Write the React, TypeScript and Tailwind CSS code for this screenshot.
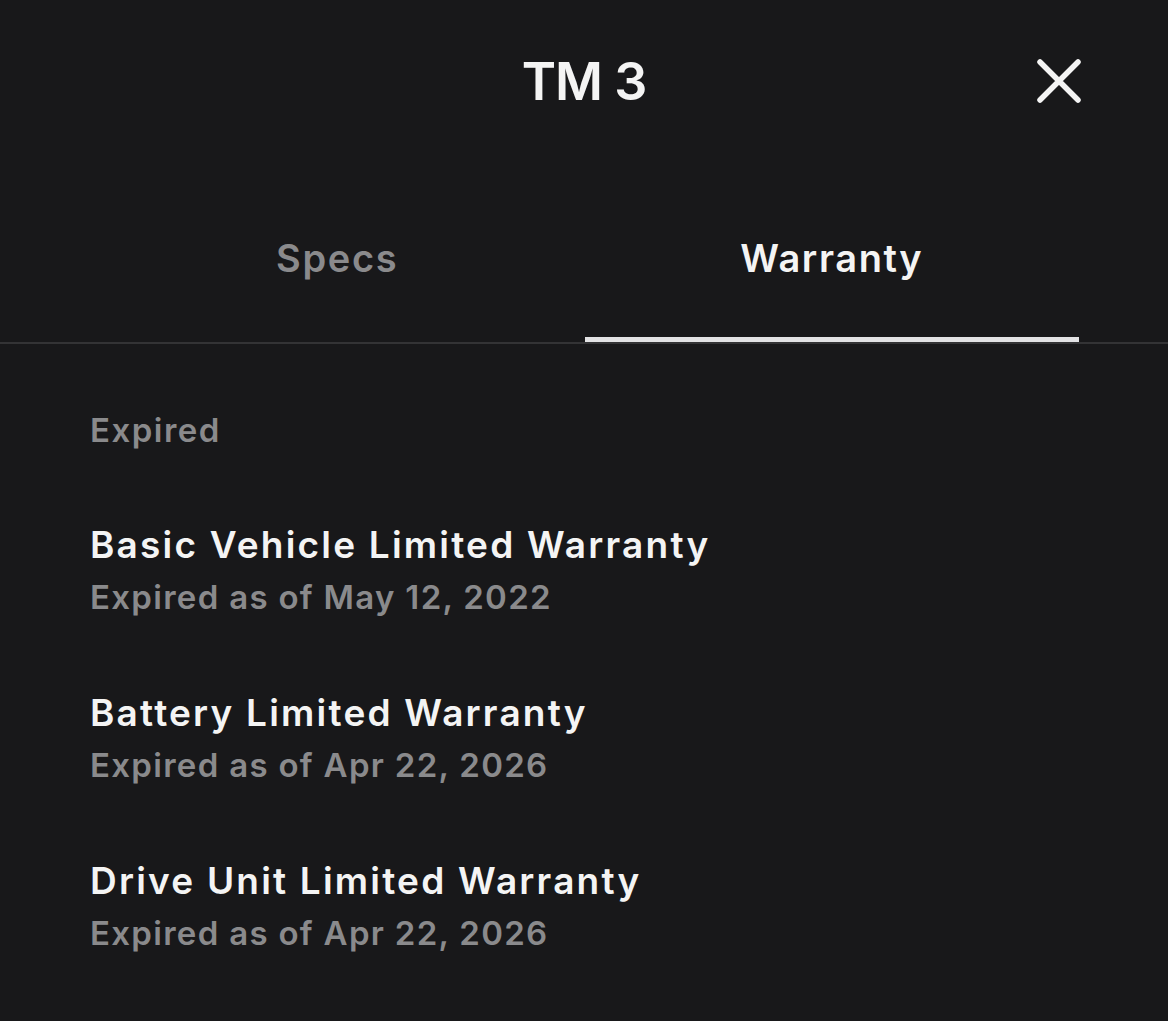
import React from "react";

const items = [
  { title: "Basic Vehicle Limited Warranty", sub: "Expired as of May 12, 2022" },
  { title: "Battery Limited Warranty", sub: "Expired as of Apr 22, 2026" },
  { title: "Drive Unit Limited Warranty", sub: "Expired as of Apr 22, 2026" },
];

export default function App() {
  return (
    <div
      className="w-[1168px] h-[1021px] bg-[#18181a] text-white overflow-hidden"
      style={{ fontFamily: "Inter, 'Noto Sans', sans-serif" }}
    >
      <div className="relative h-[166px] flex items-start justify-center pt-[52px]">
        <h1 className="text-[52px] leading-[60px] font-semibold tracking-[-1px] text-[#f4f4f4]">TM 3</h1>
        <button className="absolute left-[1036px] top-[58px] w-[46px] h-[46px] flex items-center justify-center">
          <svg width="46" height="46" viewBox="0 0 46 46" fill="none">
            <path d="M4 4 L42 42 M42 4 L4 42" stroke="#f4f4f4" strokeWidth="5.5" strokeLinecap="round" />
          </svg>
        </button>
      </div>
      <div className="border-b-2 border-[#333335]">
        <div className="flex pl-[90px] pr-[89px]">
          <div className="flex-1 h-[176px] flex items-start justify-center pt-[68px]">
            <span className="text-[38px] leading-[48px] font-semibold text-[#8a8a8c] tracking-[1.7px]">Specs</span>
          </div>
          <div className="flex-1 h-[176px] flex flex-col items-center justify-between pt-[68px]">
            <span className="text-[38px] leading-[48px] font-semibold text-[#f4f4f4] tracking-[1.6px]">Warranty</span>
            <div className="w-full h-[5px] bg-[#e2e2e4]" />
          </div>
        </div>
      </div>
      <div className="pl-[90px] pt-[64px]">
        <div className="text-[33px] leading-[44px] font-semibold text-[#8a8a8c] tracking-[1.5px]">Expired</div>
        <div className="mt-[70px] flex flex-col gap-[70px]">
          {items.map((it) => (
            <div key={it.title} className="flex flex-col">
              <div className="text-[37px] leading-[46px] font-semibold text-[#f4f4f4] tracking-[2.2px]">{it.title}</div>
              <div className="mt-[6px] text-[33px] leading-[46px] font-semibold text-[#8a8a8c] tracking-[1.3px]">{it.sub}</div>
            </div>
          ))}
        </div>
      </div>
    </div>
  );
}
